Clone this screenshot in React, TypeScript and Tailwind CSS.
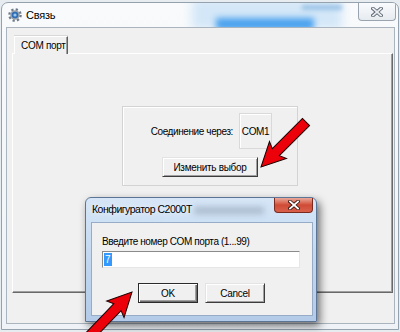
import React from "react";

const ui = "font-['Liberation_Sans',Arial,sans-serif]";

function Gear() {
    return (
        <svg width="14" height="14" viewBox="0 0 14 14">
            <circle cx="7" cy="7" r="5.6" fill="none" stroke="#6f7a86" strokeWidth="2.4" strokeDasharray="2.2 2.2" />
            <circle cx="7" cy="7" r="4.8" fill="#9aa4ae" />
            <circle cx="7" cy="7" r="3.3" fill="#2f6db5" />
            <circle cx="7" cy="7" r="1.6" fill="#9cc8f0" />
        </svg>
    );
}

function CloseX({ light }: { light?: boolean }) {
    return (
        <svg width="12" height="10" viewBox="0 0 12 10">
            <path d="M2 1.5 L10 8.5 M10 1.5 L2 8.5" stroke={light ? "#5b6470" : "#3a1a14"} strokeWidth="3.6" strokeLinecap="square" />
            <path d="M2 1.5 L10 8.5 M10 1.5 L2 8.5" stroke={light ? "#e9edf1" : "#ffffff"} strokeWidth="1.8" strokeLinecap="square" />
        </svg>
    );
}

function Arrow({ x1, y1, x2, y2 }: { x1: number; y1: number; x2: number; y2: number }) {
    const L = Math.hypot(x2 - x1, y2 - y1);
    const a = (Math.atan2(y2 - y1, x2 - x1) * 180) / Math.PI;
    const pts = `0,-5 ${L - 21},-5 ${L - 24},-12 ${L},0 ${L - 24},12 ${L - 21},5 0,5`;
    return (
        <polygon
            points={pts}
            transform={`translate(${x1} ${y1}) rotate(${a})`}
            fill="#ec0009"
            stroke="#1c0000"
            strokeWidth="1"
        />
    );
}

// classic 3D push button
function Btn({ label, def, className }: { label: string; def?: boolean; className: string }) {
    return (
        <div
            className={
                className +
                " flex items-center justify-center bg-[#f0f0f0] text-[10px] tracking-[-0.3px] text-black " +
                (def
                    ? "border border-[#2b2b2b] shadow-[inset_1px_1px_0_#ffffff,inset_-1px_-1px_0_#6e6e6e,inset_-2px_-2px_0_#a0a0a0]"
                    : "border border-t-[#e3e3e3] border-l-[#e3e3e3] border-r-[#3c3c3c] border-b-[#3c3c3c] shadow-[inset_1px_1px_0_#ffffff,inset_-1px_-1px_0_#a0a0a0]")
            }
        >
            {label}
        </div>
    );
}

export default function App() {
    return (
        <div className={"relative w-[400px] h-[332px] overflow-hidden bg-[#e7ecf1] px-[1px] pt-[2px] pb-[2px] " + ui}>
            {/* main window "Связь" */}
            <div className="relative h-full flex flex-col rounded-t-[7px] border border-[#95a1ad] bg-gradient-to-b from-[#f8fafc] to-[#eff3f7] overflow-hidden">
                {/* glass blur of what is behind */}
                <div className="absolute left-[190px] top-[-4px] w-[150px] h-[30px] bg-[#d3e7f8] blur-[5px]" />
                <div className="absolute left-[214px] top-[15px] w-[98px] h-[12px] bg-[#4aa2ee] blur-[3px]" />
                <div className="absolute left-[300px] top-[2px] w-[40px] h-[5px] bg-[#9cc3e6] blur-[2px]" />

                <div className="relative h-[24px] flex items-center pl-[6px] gap-[4px]">
                    <Gear />
                    <span className="text-[11px] tracking-[-0.2px] text-black">Связь</span>
                    <div className="ml-auto mr-[2px] self-start w-[38px] h-[18px] flex items-center justify-center rounded-b-[4px] border border-t-0 border-[#9aa4af] bg-gradient-to-b from-[#f9fbfd] to-[#e6ebf0]">
                        <CloseX light />
                    </div>
                </div>

                <div className="relative flex-1 ml-[4px] mr-[3px] mb-[5px] border border-[#a9b4bf] bg-[#f0f0f0] flex flex-col pt-[8px] pl-[5px] pr-[1px] pb-[30px]">
                    {/* tab header */}
                    <div className="flex pl-[2px]">
                        <div className="relative z-10 -mb-px w-[54px] h-[18px] bg-[#f0f0f0] border-t border-l border-[#ffffff] border-r border-r-[#5f5f5f] shadow-[inset_-1px_0_0_#a0a0a0,0_-1px_0_#d8d8d8] flex items-center pl-[6px] whitespace-nowrap text-[10px] tracking-[-0.3px] text-black">
                            COM порт
                        </div>
                    </div>
                    {/* tab pane */}
                    <div className="flex-1 border border-t-white border-l-white border-r-[#696969] border-b-[#696969] shadow-[inset_-1px_-1px_0_#a0a0a0] pt-[52px] pl-[109px]">
                        <div className="w-[176px] h-[80px] border border-[#d3d3d3] shadow-[inset_1px_1px_0_#ffffff] pt-[6px] flex flex-col">
                            <div className="flex items-center justify-end pr-[25px] gap-[6px]">
                                <span className="text-[10px] tracking-[-0.4px] text-black">Соединение через:</span>
                                <div className="w-[33px] h-[36px] border border-[#d9d9d9] shadow-[inset_1px_1px_0_#ffffff] flex items-center justify-center text-[10px] tracking-[-0.4px] text-black">
                                    COM1
                                </div>
                            </div>
                            <Btn label="Изменить выбор" className="mt-[8px] mx-auto w-[96px] h-[20px]" />
                        </div>
                    </div>
                </div>
            </div>

            {/* modal dialog */}
            <div className="absolute left-[85px] top-[197px] w-[232px] h-[125px] flex flex-col rounded-t-[6px] border border-[#5d7595] bg-gradient-to-b from-[#d6e6f7] via-[#c2d8f0] to-[#b3cbe8] shadow-[3px_4px_9px_rgba(0,0,0,0.55)]">
                <div className="absolute left-[108px] top-[9px] w-[70px] h-[7px] bg-[#a9b9cc] blur-[3px]" />
                <div className="relative h-[24px] flex items-center pl-[6px]">
                    <span className="text-[10.5px] tracking-[-0.5px] text-black [text-shadow:0_0_6px_#ffffff]">Конфигуратор С2000Т</span>
                    <div className="ml-auto mr-[3px] self-start w-[39px] h-[15px] flex items-center justify-center rounded-b-[4px] border border-t-0 border-[#7a2a1f] bg-gradient-to-b from-[#e9a99b] via-[#cf4a35] to-[#d8614c]">
                        <CloseX />
                    </div>
                </div>
                <div className="flex-1 ml-[5px] mr-[3px] mb-[5px] border border-[#97acc6] bg-[#f0f0f0] pt-[12px] pl-[10px] flex flex-col">
                    <span className="text-[10px] tracking-[-0.4px] text-black leading-[13px]">Введите номер COM порта (1...99)</span>
                    <div className="mt-[3px] w-[198px] h-[17px] bg-white border border-t-[#8a8a8a] border-l-[#8a8a8a] border-r-[#e6e6e6] border-b-[#e6e6e6] flex items-center pl-[1px]">
                        <span className="bg-[#3399ff] text-white text-[10px] leading-[13px] px-[1px]">7</span>
                    </div>
                    <div className="mt-[15px] pl-[36px] flex gap-[7px]">
                        <Btn label="OK" def className="w-[60px] h-[20px]" />
                        <Btn label="Cancel" className="w-[60px] h-[20px]" />
                    </div>
                </div>
            </div>

            {/* red arrows */}
            <svg className="absolute left-0 top-0 pointer-events-none" width="400" height="332">
                <Arrow x1={306} y1={122} x2={261} y2={167} />
                <Arrow x1={84} y1={342} x2={132} y2={292} />
            </svg>
        </div>
    );
}
